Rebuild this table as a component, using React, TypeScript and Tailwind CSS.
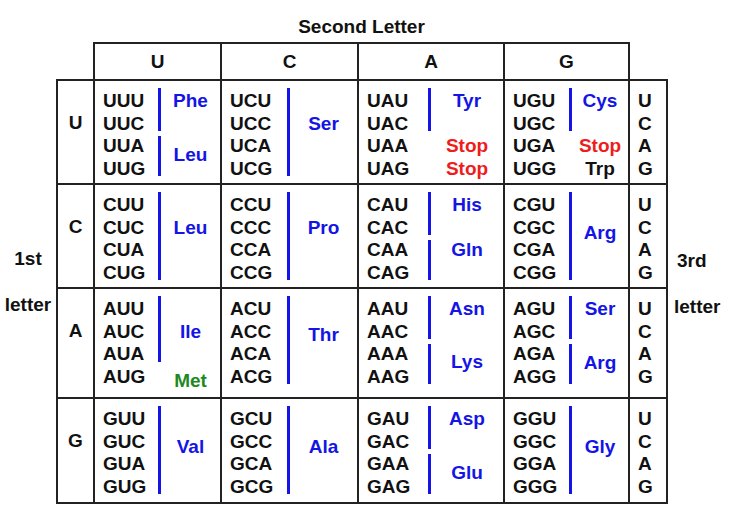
import React from "react";

type Label = { t: string; c: string; pos: string };
type Cell = { bars: string[]; labels: Label[] };

const BLUE = "text-[#1414e6]";
const RED = "text-[#ee1c1c]";
const GREEN = "text-[#1e8a1e]";
const BLACK = "text-[#111]";

const first = ["U", "C", "A", "G"];
const second = ["U", "C", "A", "G"];
const third = ["U", "C", "A", "G"];
const lineRow = ["row-start-1", "row-start-2", "row-start-3", "row-start-4"];

// bar column offset differs a little per column of the picture
const colGrid = [
  "grid-cols-[55px_3px_1fr]",
  "grid-cols-[57px_3px_1fr]",
  "grid-cols-[61px_3px_1fr]",
  "grid-cols-[56px_3px_1fr]",
];
const colWidth = ["w-[127px]", "w-[137px]", "w-[146px]", "w-[125px]"];

const B12 = "row-start-1 row-span-2 -mt-[2px] mb-[4px]";
const B13 = "row-start-1 row-span-3 -mt-[2px] mb-[4px]";
const B14 = "row-start-1 row-span-4 -mt-[2px] mb-[4px]";
const B34 = "row-start-3 row-span-2 mt-[1px] mb-[4px]";

const table: Cell[][] = [
  [
    { bars: [B12, B34], labels: [{ t: "Phe", c: BLUE, pos: "row-start-1" }, { t: "Leu", c: BLUE, pos: "row-start-3 row-span-2 -translate-y-[2px]" }] },
    { bars: [B14], labels: [{ t: "Ser", c: BLUE, pos: "row-start-2" }] },
    { bars: [B12], labels: [{ t: "Tyr", c: BLUE, pos: "row-start-1" }, { t: "Stop", c: RED, pos: "row-start-3" }, { t: "Stop", c: RED, pos: "row-start-4" }] },
    { bars: [B12], labels: [{ t: "Cys", c: BLUE, pos: "row-start-1" }, { t: "Stop", c: RED, pos: "row-start-3" }, { t: "Trp", c: BLACK, pos: "row-start-4" }] },
  ],
  [
    { bars: [B14], labels: [{ t: "Leu", c: BLUE, pos: "row-start-2" }] },
    { bars: [B14], labels: [{ t: "Pro", c: BLUE, pos: "row-start-2" }] },
    { bars: [B12, B34], labels: [{ t: "His", c: BLUE, pos: "row-start-1" }, { t: "Gln", c: BLUE, pos: "row-start-3" }] },
    { bars: [B14], labels: [{ t: "Arg", c: BLUE, pos: "row-start-2 translate-y-[5px]" }] },
  ],
  [
    { bars: [B13], labels: [{ t: "Ile", c: BLUE, pos: "row-start-2" }, { t: "Met", c: GREEN, pos: "row-start-4 translate-y-[4px]" }] },
    { bars: [B14], labels: [{ t: "Thr", c: BLUE, pos: "row-start-2 translate-y-[3px]" }] },
    { bars: [B12, B34], labels: [{ t: "Asn", c: BLUE, pos: "row-start-1" }, { t: "Lys", c: BLUE, pos: "row-start-3 row-span-2 -translate-y-[3px]" }] },
    { bars: [B12, B34], labels: [{ t: "Ser", c: BLUE, pos: "row-start-1" }, { t: "Arg", c: BLUE, pos: "row-start-3 row-span-2 -translate-y-[2px]" }] },
  ],
  [
    { bars: [B14], labels: [{ t: "Val", c: BLUE, pos: "row-start-2 translate-y-[5px]" }] },
    { bars: [B14], labels: [{ t: "Ala", c: BLUE, pos: "row-start-2 translate-y-[5px]" }] },
    { bars: [B12, B34], labels: [{ t: "Asp", c: BLUE, pos: "row-start-1" }, { t: "Glu", c: BLUE, pos: "row-start-3 row-span-2 -translate-y-[2px]" }] },
    { bars: [B14], labels: [{ t: "Gly", c: BLUE, pos: "row-start-2 translate-y-[5px]" }] },
  ],
];

const rowHeight = ["h-[104px] border-b-2", "h-[104px] border-b-2", "h-[110px] border-b-2", "h-[103px]"];

function CodonCell({ f, s, ci, cell }: { f: string; s: string; ci: number; cell: Cell }) {
  return (
    <div className={`${colWidth[ci]} border-r-2 border-[#222] pl-[8px] pt-[9px]`}>
      <div className={`grid ${colGrid[ci]} grid-rows-[repeat(4,22.5px)] leading-[22.5px]`}>
        {third.map((t, i) => (
          <div key={t} className={`col-start-1 text-[#111] ${lineRow[i]}`}>
            {f + s + t}
          </div>
        ))}
        {cell.bars.map((b, i) => (
          <div key={i} className={`col-start-2 bg-[#1414e6] ${b}`} />
        ))}
        {cell.labels.map((l, i) => (
          <div key={i} className={`col-start-3 self-center text-center ${l.c} ${l.pos}`}>
            {l.t}
          </div>
        ))}
      </div>
    </div>
  );
}

export default function App() {
  return (
    <div className="w-[731px] h-[532px] bg-white text-[#111] font-bold text-[19px] font-['Liberation_Sans',Arial,sans-serif] overflow-hidden">
      <div className="pt-[16px]">
        <div className="ml-[93px] w-[537px] h-[22px] leading-[22px] text-center">Second Letter</div>
        <div className="ml-[93px] mt-[4px] w-[537px] h-[37px] flex border-t-2 border-x-2 border-[#222]">
          {second.map((s, i) => (
            <div
              key={s}
              className={`${i === 3 ? "w-[123px]" : colWidth[i] + " border-r-2"} border-[#222] flex items-center justify-center pt-[2px]`}
            >
              {s}
            </div>
          ))}
        </div>
        <div className="flex">
          <div className="w-[56px] flex flex-col items-center pt-[169px] gap-[24px] leading-[22px]">
            <div className="h-[22px]">1st</div>
            <div className="h-[22px]">letter</div>
          </div>
          <div className="w-[612px] border-2 border-[#222]">
            {first.map((f, ri) => (
              <div key={f} className={`flex ${rowHeight[ri]} border-[#222]`}>
                <div className="w-[37px] border-r-2 border-[#222] text-center pt-[31px] leading-[22.5px]">{f}</div>
                {second.map((s, ci) => (
                  <CodonCell key={s} f={f} s={s} ci={ci} cell={table[ri][ci]} />
                ))}
                <div className="w-[36px] pl-[8px] pt-[9px] leading-[22.5px]">
                  {third.map((t) => (
                    <div key={t}>{t}</div>
                  ))}
                </div>
              </div>
            ))}
          </div>
          <div className="w-[63px] flex flex-col pt-[171px] gap-[24px] leading-[22px]">
            <div className="h-[22px] ml-[9px]">3rd</div>
            <div className="h-[22px] ml-[6px]">letter</div>
          </div>
        </div>
      </div>
    </div>
  );
}
